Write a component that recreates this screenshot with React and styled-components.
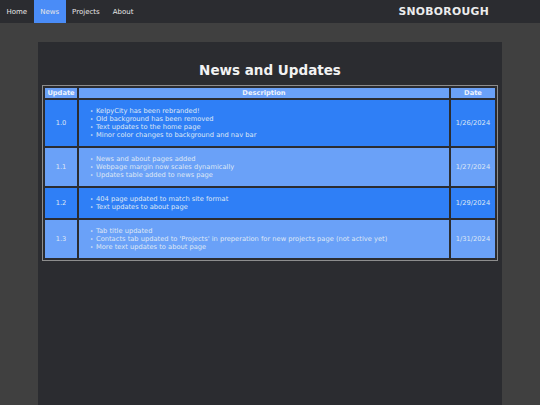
import React from "react";
import styled, { createGlobalStyle } from "styled-components";

const GlobalStyle = createGlobalStyle`
  html, body {
    margin: 0;
    padding: 0;
    background-color: #404040;
    font-family: "DejaVu Sans", Verdana, sans-serif;
  }
`;

const Page = styled.div`
  min-height: 405px;
  display: flex;
  flex-direction: column;
`;

const Nav = styled.nav`
  height: 23px;
  background-color: #2b2c30;
  display: flex;
  align-items: stretch;
`;

const NavItem = styled.a`
  display: flex;
  align-items: center;
  padding: 0 6.5px;
  font-size: 7px;
  color: #e6e6e6;
  text-decoration: none;
  background-color: ${(props) => (props.active ? "#4a8cf7" : "transparent")};
`;

const Brand = styled.div`
  margin-left: auto;
  padding-right: 51px;
  display: flex;
  align-items: center;
  font-size: 10.8px;
  font-weight: bold;
  color: #ececec;
  letter-spacing: 0.3px;
`;

const Main = styled.main`
  flex: 1;
  margin: 19px 38px 0;
  padding: 4px 4px 0;
  background-color: #2b2c30;
`;

const Title = styled.h1`
  margin: 16px 0 7px;
  text-align: center;
  font-size: 13.5px;
  font-weight: bold;
  color: #f2f2f2;
`;

const Table = styled.table`
  width: 100%;
  border-collapse: separate;
  border-spacing: 2px;
  border: 1px solid #8d8d8d;
  background-color: #2b2c30;
  font-size: 6.7px;
  color: #dfe7f5;
`;

const Th = styled.th`
  background-color: #6aa1f8;
  border: 0;
  padding: 1px 2px;
  font-weight: bold;
  color: #eef3fb;
  line-height: 8px;
  width: ${(props) => props.width || "auto"};
`;

const Td = styled.td`
  background-color: ${(props) => (props.dark ? "#2f7ff6" : "#6aa1f8")};
  border: 0;
  padding: 7px 2px;
  text-align: ${(props) => (props.left ? "left" : "center")};
  vertical-align: middle;
`;

const List = styled.ul`
  margin: 0;
  padding-left: 15px;
  line-height: 8px;
  list-style: none;
`;

const Item = styled.li`
  &::before {
    content: "•";
    display: inline-block;
    width: 6px;
    margin-left: -6px;
    font-size: 5.5px;
  }
`;

const updates = [
  {
    version: "1.0",
    items: [
      "KelpyCity has been rebranded!",
      "Old background has been removed",
      "Text updates to the home page",
      "Minor color changes to background and nav bar",
    ],
    date: "1/26/2024",
  },
  {
    version: "1.1",
    items: [
      "News and about pages added",
      "Webpage margin now scales dynamically",
      "Updates table added to news page",
    ],
    date: "1/27/2024",
  },
  {
    version: "1.2",
    items: ["404 page updated to match site format", "Text updates to about page"],
    date: "1/29/2024",
  },
  {
    version: "1.3",
    items: [
      "Tab title updated",
      "Contacts tab updated to 'Projects' in preperation for new projects page (not active yet)",
      "More text updates to about page",
    ],
    date: "1/31/2024",
  },
];

const App = () => {
  return (
    <Page>
      <GlobalStyle />
      <Nav>
        <NavItem href="#">Home</NavItem>
        <NavItem href="#" active>
          News
        </NavItem>
        <NavItem href="#">Projects</NavItem>
        <NavItem href="#">About</NavItem>
        <Brand>SNOBOROUGH</Brand>
      </Nav>
      <Main>
        <Title>News and Updates</Title>
        <Table>
          <thead>
            <tr>
              <Th width="28px">Update</Th>
              <Th>Description</Th>
              <Th width="40px">Date</Th>
            </tr>
          </thead>
          <tbody>
            {updates.map((u, i) => (
              <tr key={u.version}>
                <Td dark={i % 2 === 0}>{u.version}</Td>
                <Td dark={i % 2 === 0} left>
                  <List>
                    {u.items.map((item) => (
                      <Item key={item}>{item}</Item>
                    ))}
                  </List>
                </Td>
                <Td dark={i % 2 === 0}>{u.date}</Td>
              </tr>
            ))}
          </tbody>
        </Table>
      </Main>
    </Page>
  );
};

export default App;
